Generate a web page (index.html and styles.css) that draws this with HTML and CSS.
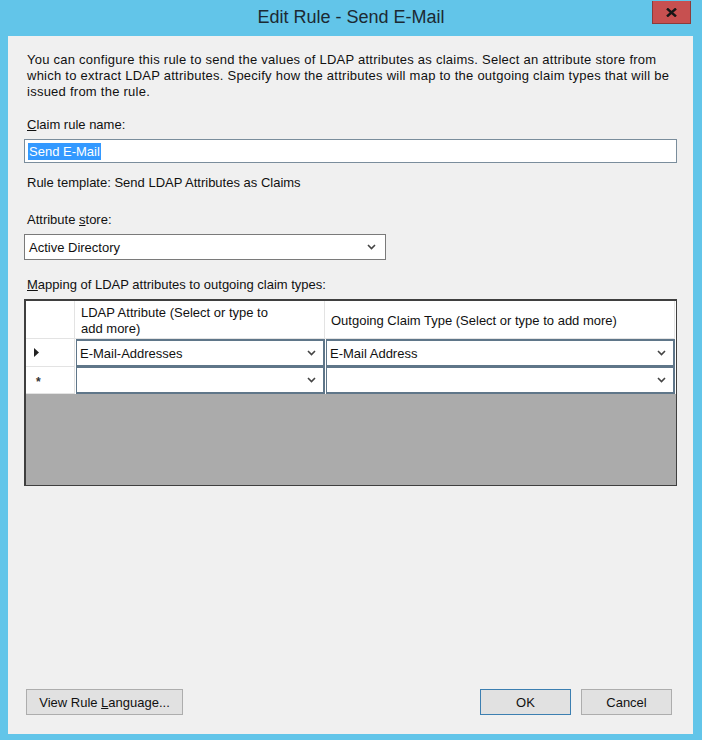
FILE: index.html
```html
<!DOCTYPE html>
<html lang="en">
<head>
    <meta charset="UTF-8">
    <title>Edit Rule - Send E-Mail</title>
    <link rel="stylesheet" href="styles.css">
</head>
<body>
    <div class="window">
        <header class="titlebar">
            <span></span>
            <h1 class="tit-window">Edit Rule - Send E-Mail</h1>
            <button class="btn-close" aria-label="Close">
                <svg width="11" height="9" viewBox="0 0 11 9"><path d="M1 0.5 L10 8.5 M10 0.5 L1 8.5" stroke="#161616" stroke-width="2.4" fill="none"/></svg>
            </button>
        </header>
        <main class="dialog">
            <p class="desc">You can configure this rule to send the values of LDAP attributes as claims. Select an attribute store from<br>which to extract LDAP attributes. Specify how the attributes will map to the outgoing claim types that will be<br>issued from the rule.</p>

            <label class="lbl lbl-name"><u>C</u>laim rule name:</label>
            <div class="textbox"><span class="sel">Send E-Mail</span></div>

            <p class="lbl lbl-template">Rule template: Send LDAP Attributes as Claims</p>

            <label class="lbl lbl-store">Attribute <u>s</u>tore:</label>
            <div class="combo combo-store">
                <span>Active Directory</span>
                <svg class="chev" width="9" height="6" viewBox="0 0 9 6"><path d="M1 1 L4.5 4.5 L8 1" stroke="#444" stroke-width="1.6" fill="none"/></svg>
            </div>

            <label class="lbl lbl-map"><u>M</u>apping of LDAP attributes to outgoing claim types:</label>
            <div class="grid">
                <div class="grid-row grid-head">
                    <div class="cell-rh"></div>
                    <div class="cell-h cell-h-ldap">LDAP Attribute (Select or type to add more)</div>
                    <div class="cell-h">Outgoing Claim Type (Select or type to add more)</div>
                </div>
                <div class="grid-row grid-body">
                    <div class="cell-rh">
                        <svg width="6" height="9" viewBox="0 0 6 9"><path d="M0 0 L5 4.5 L0 9 Z" fill="#222"/></svg>
                    </div>
                    <div class="cell-c">
                        <span>E-Mail-Addresses</span>
                        <svg class="chev" width="9" height="6" viewBox="0 0 9 6"><path d="M1 1 L4.5 4.5 L8 1" stroke="#444" stroke-width="1.6" fill="none"/></svg>
                    </div>
                    <div class="cell-c">
                        <span>E-Mail Address</span>
                        <svg class="chev" width="9" height="6" viewBox="0 0 9 6"><path d="M1 1 L4.5 4.5 L8 1" stroke="#444" stroke-width="1.6" fill="none"/></svg>
                    </div>
                </div>
                <div class="grid-row grid-body">
                    <div class="cell-rh"><span class="star">*</span></div>
                    <div class="cell-c">
                        <span></span>
                        <svg class="chev" width="9" height="6" viewBox="0 0 9 6"><path d="M1 1 L4.5 4.5 L8 1" stroke="#444" stroke-width="1.6" fill="none"/></svg>
                    </div>
                    <div class="cell-c">
                        <span></span>
                        <svg class="chev" width="9" height="6" viewBox="0 0 9 6"><path d="M1 1 L4.5 4.5 L8 1" stroke="#444" stroke-width="1.6" fill="none"/></svg>
                    </div>
                </div>
                <div class="grid-empty"></div>
            </div>

            <div class="footer">
                <button class="btn btn-lang">View Rule <u>L</u>anguage...</button>
                <div class="footer-right">
                    <button class="btn btn-ok">OK</button>
                    <button class="btn">Cancel</button>
                </div>
            </div>
        </main>
    </div>
</body>
</html>
```

FILE: styles.css
```css
html, body {
    margin: 0;
    padding: 0;
}
body {
    background: #62c5e9;
    font-family: 'Liberation Sans', Arial, sans-serif;
    font-size: 13px;
    color: #111;
}
.window {
    width: 702px;
    height: 740px;
    display: flex;
    flex-direction: column;
}
.titlebar {
    height: 36px;
    display: grid;
    grid-template-columns: 1fr auto 1fr;
}
.tit-window {
    margin: 0;
    padding-top: 6px;
    font-size: 18px;
    font-weight: 400;
    line-height: 22px;
    color: #1c2a33;
}
.btn-close {
    justify-self: end;
    align-self: start;
    margin: 1px 11px 0 0;
    width: 39px;
    height: 23px;
    padding: 0;
    background: #c75050;
    border: 1px solid #8c3b3b;
    border-top: 0;
    display: flex;
    align-items: center;
    justify-content: center;
}
.dialog {
    flex: 1;
    margin: 0 9px 6px 8px;
    background: #f0f0f0;
    padding: 16px 16px 19px;
    display: flex;
    flex-direction: column;
}
.desc {
    margin: 0 0 0 3px;
    line-height: 16px;
    letter-spacing: 0.25px;
    white-space: nowrap;
}
.lbl {
    display: block;
    margin-left: 3px;
    line-height: 16px;
}
.lbl-name { margin-top: 17px; }
.lbl-template { margin-top: 12px; margin-bottom: 0; }
.lbl-store { margin-top: 21px; }
.lbl-map { margin-top: 17px; }
.textbox {
    margin-top: 6px;
    height: 22px;
    background: #fff;
    border: 1px solid #7a8d9c;
    display: flex;
    align-items: center;
    padding-left: 3px;
}
.sel {
    background: #3399ff;
    color: #fff;
    line-height: 17px;
    padding: 0 1px;
}
.combo {
    margin-top: 6px;
    background: #fff;
    border: 1px solid #7a7a7a;
    display: flex;
    align-items: center;
    justify-content: space-between;
    padding: 0 9px 0 4px;
    box-sizing: border-box;
    width: 362px;
    height: 26px;
}
.grid {
    margin-top: 6px;
    height: 187px;
    box-sizing: border-box;
    border: 2px solid #3f3f3f;
    border-right-width: 1px;
    border-bottom-width: 1px;
    display: flex;
    flex-direction: column;
    background: #ababab;
}
.grid-row {
    display: grid;
    grid-template-columns: 49px 250px 350px;
    background: #fff;
}
.grid-head {
    height: 38px;
}
.grid-head > div {
    border-right: 1px solid #e3e3e3;
    border-bottom: 1px solid #e3e3e3;
}
.cell-h {
    display: flex;
    align-items: center;
    padding: 3px 14px 0 6px;
    line-height: 16px;
}
.cell-h-ldap {
    padding-right: 38px;
}
.grid-body {
    height: 28px;
}
.grid-body + .grid-body {
    height: 27px;
}
.cell-rh {
    border-right: 1px solid #e3e3e3;
    border-bottom: 1px solid #e3e3e3;
    display: flex;
    align-items: center;
    padding-left: 8px;
}
.star {
    font-weight: 700;
    font-size: 12px;
    color: #333;
    padding-left: 2px;
    line-height: 12px;
    padding-top: 4px;
}
.cell-c {
    border: 2px solid #5f7689;
    border-left-width: 1px;
    margin-left: 1px;
    display: flex;
    align-items: center;
    justify-content: space-between;
    padding: 0 7px 0 3px;
    background: #fff;
}
.grid-body + .grid-body .cell-c {
    border-top-width: 1px;
}
.chev {
    display: block;
}
.grid-empty {
    flex: 1;
}
.footer {
    margin-top: auto;
    display: flex;
    justify-content: space-between;
    padding: 0 5px 0 2px;
}
.footer-right {
    display: flex;
    gap: 10px;
}
.btn {
    height: 26px;
    width: 91px;
    background: #e1e1e1;
    border: 1px solid #adadad;
    font-family: 'Liberation Sans', Arial, sans-serif;
    font-size: 13px;
    color: #111;
    padding: 0;
}
.btn-lang {
    width: 157px;
}
.btn-ok {
    border-color: #3c7fb1;
}
```
